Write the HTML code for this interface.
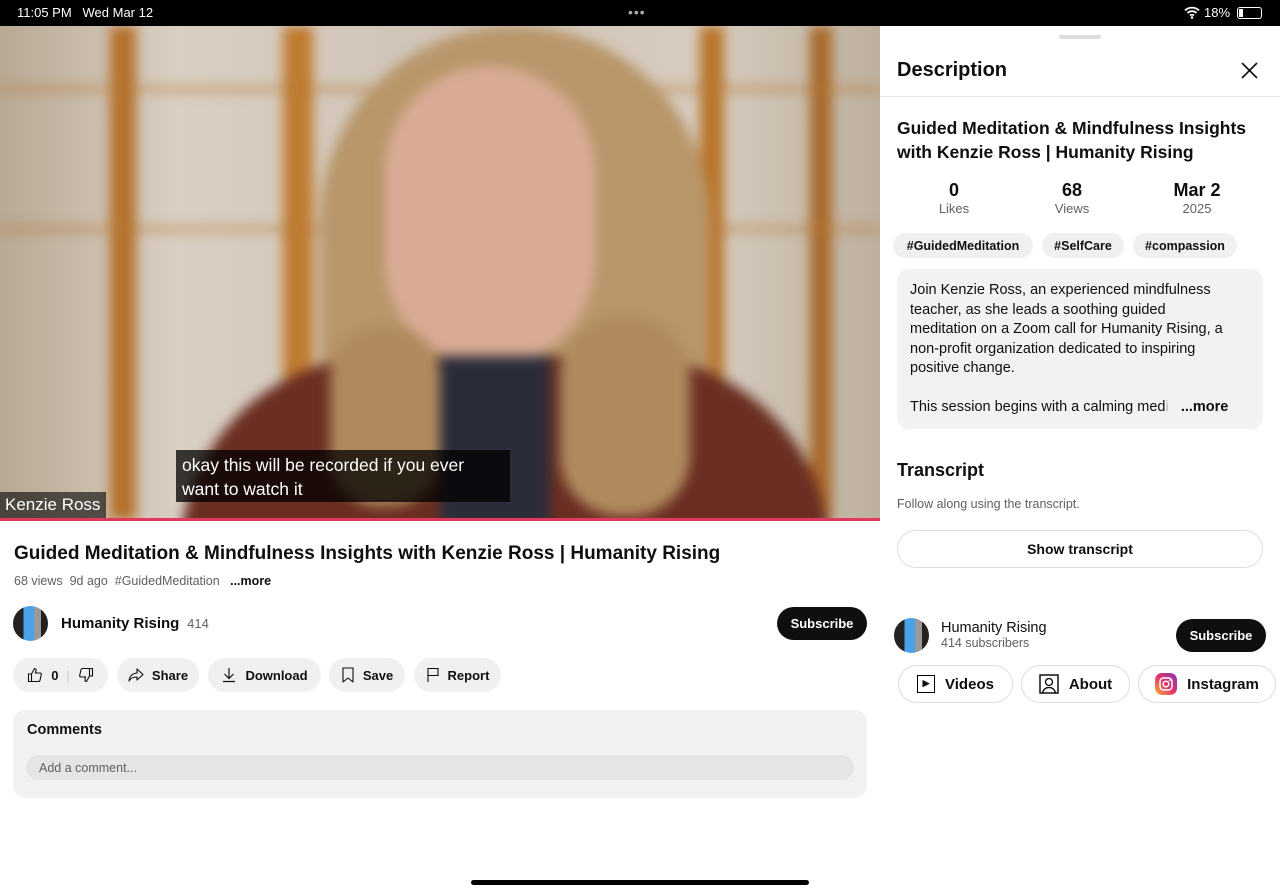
<!DOCTYPE html>
<html><head><style>
*{margin:0;padding:0;box-sizing:border-box}
body{width:1280px;height:894px;background:#fff;font-family:"Liberation Sans",Arial,sans-serif;position:relative;overflow:hidden;color:#0f0f0f}
.abs{position:absolute}
.pill{position:absolute;background:#f0f0f0;border-radius:18px;height:34px;top:658px;font-size:13px;font-weight:bold;display:flex;align-items:center;justify-content:center;gap:8px}
.tag{position:absolute;top:233px;height:25px;background:#f0f0f0;border-radius:13px;font-size:12.5px;font-weight:bold;display:flex;align-items:center;justify-content:center}
.ob{position:absolute;top:665px;height:38px;border:1px solid #ddd;border-radius:19px;font-size:15px;font-weight:bold;display:flex;align-items:center;justify-content:center;gap:10px}
svg{display:block}
</style></head><body>
<div class="abs" style="left:0;top:0;width:1280px;height:26px;background:#000"></div>
<div class="abs" style="left:17px;top:5px;color:#fff;font-size:13px">11:05 PM &nbsp; Wed Mar 12</div>
<div class="abs" style="left:628px;top:4px;color:#aaa;font-size:14px;letter-spacing:1px">•••</div>
<svg class="abs" style="left:1184px;top:6px" width="16" height="13" viewBox="0 0 16 13"><path d="M1 4.5a10 10 0 0 1 14 0M3.5 7a6.5 6.5 0 0 1 9 0M6 9.5a3 3 0 0 1 4 0" stroke="#fff" stroke-width="1.8" fill="none"/><circle cx="8" cy="11.5" r="1.3" fill="#fff"/></svg>
<div class="abs" style="left:1204px;top:5px;color:#fff;font-size:13px">18%</div>
<div class="abs" style="left:1237px;top:7px;width:25px;height:12px;border:1px solid #fff;border-radius:3px"><div style="width:4px;height:8px;background:#fff;margin:1px"></div></div>
<!-- video -->
<div class="abs" style="left:0;top:26px;width:880px;height:494px;overflow:hidden;background:linear-gradient(90deg,#b8a994 0%,#d9cfc2 20%,#cfc4b6 50%,#d7ccbf 80%,#bdb09e 100%)">
 <div style="position:absolute;inset:0;filter:blur(6px)">
 <div class="abs" style="left:110px;top:0;width:26px;height:494px;background:#b4702a"></div>
 <div class="abs" style="left:283px;top:0;width:30px;height:494px;background:#c07a2e"></div>
 <div class="abs" style="left:700px;top:0;width:24px;height:494px;background:#b87328"></div>
 <div class="abs" style="left:810px;top:0;width:22px;height:494px;background:#a9692a"></div>
 <div class="abs" style="left:0;top:60px;width:880px;height:6px;background:#b77a3a;opacity:.6"></div>
 <div class="abs" style="left:0;top:200px;width:880px;height:6px;background:#b77a3a;opacity:.6"></div>
 <div class="abs" style="left:320px;top:0;width:390px;height:494px;border-radius:200px 200px 0 0;background:#b8966a"></div>
 <div class="abs" style="left:385px;top:40px;width:210px;height:300px;border-radius:105px;background:#d9ab95"></div>
 <div class="abs" style="left:180px;top:330px;width:650px;height:220px;border-radius:200px 200px 0 0;background:#6b2e22"></div>
 <div class="abs" style="left:330px;top:300px;width:110px;height:180px;border-radius:50px;background:#b08a5e"></div>
 <div class="abs" style="left:560px;top:290px;width:130px;height:200px;border-radius:60px;background:#b08a5e"></div>
 <div class="abs" style="left:440px;top:330px;width:110px;height:170px;background:#2b2c3a"></div>
 </div>
 <div class="abs" style="left:176px;top:424px;width:334px;height:52px;background:rgba(0,0,0,.75)"></div>
 <div class="abs" style="left:182px;top:427px;color:#fff;font-size:17.5px;line-height:24px">okay this will be recorded if you ever<br>want to watch it</div>
 <div class="abs" style="left:0;top:466px;width:106px;height:26px;background:rgba(0,0,0,.6)"></div>
 <div class="abs" style="left:5px;top:469px;color:#fff;font-size:17px">Kenzie Ross</div>
</div>
<div class="abs" style="left:0;top:518px;width:880px;height:3px;background:#e23a5f"></div>
<div class="abs" style="left:14px;top:543px;font-size:19px;font-weight:bold">Guided Meditation &amp; Mindfulness Insights with Kenzie Ross | Humanity Rising</div>
<div class="abs" style="left:14px;top:574px;font-size:12.5px;color:#606060">68 views&nbsp; 9d ago&nbsp; #GuidedMeditation &nbsp; <b style="color:#0f0f0f">...more</b></div>
<div class="abs" style="left:13px;top:606px;width:35px;height:35px;border-radius:50%;background:linear-gradient(90deg,#222 30%,#4aa3e8 30%,#4aa3e8 60%,#999 60%,#999 80%,#222 80%)"></div>
<div class="abs" style="left:61px;top:615px;font-size:15px;font-weight:bold">Humanity Rising <span style="font-weight:normal;color:#606060;font-size:13px">&nbsp;414</span></div>
<div class="abs" style="left:777px;top:607px;width:90px;height:33px;background:#0f0f0f;border-radius:17px;color:#fff;font-size:13px;font-weight:bold;text-align:center;line-height:33px">Subscribe</div>
<div class="pill" style="left:13px;width:95px">
<svg width="16" height="16" viewBox="0 0 16 16"><path d="M1.5 7h3v7.5h-3zM4.5 7l3-5.5c1.2 0 1.8.8 1.5 2L8.5 6H13c.9 0 1.5.8 1.3 1.6l-1.3 5.6c-.2.7-.8 1.3-1.5 1.3H4.5" stroke="#0f0f0f" stroke-width="1.1" fill="none"/></svg>
0 <span style="color:#ccc;font-weight:normal">|</span>
<svg width="16" height="16" viewBox="0 0 16 16" style="transform:rotate(180deg)"><path d="M1.5 7h3v7.5h-3zM4.5 7l3-5.5c1.2 0 1.8.8 1.5 2L8.5 6H13c.9 0 1.5.8 1.3 1.6l-1.3 5.6c-.2.7-.8 1.3-1.5 1.3H4.5" stroke="#0f0f0f" stroke-width="1.1" fill="none"/></svg></div>
<div class="pill" style="left:117px;width:82px"><svg width="16" height="14" viewBox="0 0 16 14"><path d="M9 1l6 5.5L9 12V9C5 9 2.5 10 1 13c.5-4.5 3-7.5 8-8z" stroke="#0f0f0f" stroke-width="1.1" fill="none" stroke-linejoin="round"/></svg>Share</div>
<div class="pill" style="left:208px;width:113px"><svg width="16" height="16" viewBox="0 0 16 16"><path d="M8 1v10M3.5 7L8 11.5 12.5 7M2 14.5h12" stroke="#0f0f0f" stroke-width="1.2" fill="none"/></svg>Download</div>
<div class="pill" style="left:329px;width:76px"><svg width="14" height="16" viewBox="0 0 14 16"><path d="M2 1h10v14l-5-4-5 4z" stroke="#0f0f0f" stroke-width="1.1" fill="none" stroke-linejoin="round"/></svg>Save</div>
<div class="pill" style="left:414px;width:87px"><svg width="14" height="16" viewBox="0 0 14 16"><path d="M2 15V1.5h10v7H2" stroke="#0f0f0f" stroke-width="1.1" fill="none"/></svg>Report</div>
<div class="abs" style="left:13px;top:710px;width:854px;height:88px;background:#f2f2f2;border-radius:12px"></div>
<div class="abs" style="left:27px;top:722px;font-size:14.5px;font-weight:bold">Comments</div>
<div class="abs" style="left:26px;top:755px;width:828px;height:25px;background:#e5e5e5;border-radius:13px;font-size:12.5px;color:#606060;padding:6px 13px">Add a comment...</div>
<div class="abs" style="left:471px;top:880px;width:338px;height:5px;border-radius:3px;background:#000"></div>
<!-- panel -->
<div class="abs" style="left:880px;top:26px;width:400px;height:868px;background:#fff;border-radius:12px 12px 0 0"></div>
<div class="abs" style="left:1059px;top:35px;width:42px;height:4px;border-radius:2px;background:#ddd"></div>
<div class="abs" style="left:897px;top:59px;font-size:20px;font-weight:bold">Description</div>
<svg class="abs" style="left:1241px;top:62px" width="17" height="17" viewBox="0 0 17 17"><path d="M1 1l15 15M16 1L1 16" stroke="#0f0f0f" stroke-width="1.6"/></svg>
<div class="abs" style="left:880px;top:96px;width:400px;height:1px;background:#e5e5e5"></div>
<div class="abs" style="left:897px;top:116px;font-size:17.5px;font-weight:bold;line-height:24px">Guided Meditation &amp; Mindfulness Insights<br>with Kenzie Ross | Humanity Rising</div>
<div class="abs" style="left:904px;top:180px;width:100px;text-align:center;font-size:18px;font-weight:bold">0<div style="font-size:13px;font-weight:normal;color:#606060">Likes</div></div>
<div class="abs" style="left:1022px;top:180px;width:100px;text-align:center;font-size:18px;font-weight:bold">68<div style="font-size:13px;font-weight:normal;color:#606060">Views</div></div>
<div class="abs" style="left:1147px;top:180px;width:100px;text-align:center;font-size:18px;font-weight:bold">Mar 2<div style="font-size:13px;font-weight:normal;color:#606060">2025</div></div>
<div class="tag" style="left:893px;width:140px">#GuidedMeditation</div>
<div class="tag" style="left:1042px;width:82px">#SelfCare</div>
<div class="tag" style="left:1133px;width:104px">#compassion</div>
<div class="abs" style="left:897px;top:269px;width:366px;height:160px;background:#f2f2f2;border-radius:12px;padding:12px 13px;font-size:14.5px;line-height:19.5px;white-space:nowrap">Join Kenzie Ross, an experienced mindfulness<br>teacher, as she leads a soothing guided<br>meditation on a Zoom call for Humanity Rising, a<br>non-profit organization dedicated to inspiring<br>positive change.<br><br>This session begins with a calming med<span style="color:#bbb">i</span> &nbsp;&nbsp;<b>...more</b></div>
<div class="abs" style="left:897px;top:460px;font-size:18px;font-weight:bold">Transcript</div>
<div class="abs" style="left:897px;top:497px;font-size:12.5px;color:#606060">Follow along using the transcript.</div>
<div class="abs" style="left:897px;top:530px;width:366px;height:38px;border:1px solid #ddd;border-radius:19px;text-align:center;line-height:36px;font-size:14px;font-weight:bold">Show transcript</div>
<div class="abs" style="left:894px;top:618px;width:35px;height:35px;border-radius:50%;background:linear-gradient(90deg,#222 30%,#4aa3e8 30%,#4aa3e8 60%,#999 60%,#999 80%,#222 80%)"></div>
<div class="abs" style="left:941px;top:620px;font-size:14.5px">Humanity Rising<div style="font-size:12.5px;color:#606060">414 subscribers</div></div>
<div class="abs" style="left:1176px;top:619px;width:90px;height:33px;background:#0f0f0f;border-radius:17px;color:#fff;font-size:13px;font-weight:bold;text-align:center;line-height:33px">Subscribe</div>
<div class="ob" style="left:898px;width:115px"><span style="display:inline-block;width:18px;height:18px;border:1.5px solid #000;font-size:9px;line-height:15px;text-align:center">▶</span>Videos</div>
<div class="ob" style="left:1021px;width:109px"><svg width="20" height="20" viewBox="0 0 20 20"><rect x="1" y="1" width="18" height="18" stroke="#000" stroke-width="1.4" fill="none"/><circle cx="10" cy="8" r="3.5" stroke="#000" stroke-width="1.3" fill="none"/><path d="M3.5 19c1-4 3.5-5.5 6.5-5.5s5.5 1.5 6.5 5.5" stroke="#000" stroke-width="1.3" fill="none"/></svg>About</div>
<div class="ob" style="left:1138px;width:138px"><svg width="22" height="22" viewBox="0 0 22 22"><defs><linearGradient id="ig" x1="0" y1="1" x2="1" y2="0"><stop offset="0" stop-color="#f9b43a"/><stop offset=".5" stop-color="#e1306c"/><stop offset="1" stop-color="#833ab4"/></linearGradient></defs><rect width="22" height="22" rx="7" fill="url(#ig)"/><rect x="5" y="5" width="12" height="12" rx="3.5" stroke="#fff" stroke-width="1.5" fill="none"/><circle cx="11" cy="11" r="2.8" stroke="#fff" stroke-width="1.5" fill="none"/><circle cx="14.6" cy="7.4" r=".9" fill="#fff"/></svg>Instagram</div>
</body></html>
